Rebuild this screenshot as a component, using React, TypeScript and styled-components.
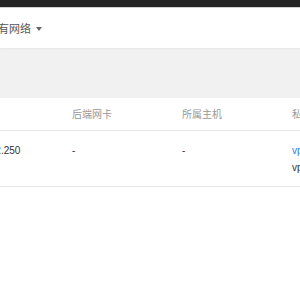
import React from "react";
import styled, { createGlobalStyle } from "styled-components";

const Global = createGlobalStyle`
  html, body { margin: 0; padding: 0; background: #fff; overflow: hidden; }
  body {
    width: 300px;
    font-family: "Liberation Sans", "Noto Sans CJK SC", sans-serif;
  }
`;

const TopBar = styled.div`
  height: 7px;
  background: #242424;
  border-bottom: 1px solid #d0d0d0;
`;

const FilterBar = styled.div`
  height: 40px;
  box-sizing: border-box;
  padding-top: 2px;
  display: flex;
  align-items: center;
  background: #fff;
  position: relative;
  z-index: 1;
  box-shadow: 0 1px 2px rgba(0, 0, 0, 0.05);
`;

const FilterLabel = styled.span`
  margin-left: -13px;
  font-size: 11px;
  line-height: 1;
  color: #555;
  display: flex;
  align-items: center;
  gap: 5px;
  white-space: nowrap;
`;

const Caret = styled.span`
  width: 0;
  height: 0;
  border-left: 3.5px solid transparent;
  border-right: 3.5px solid transparent;
  border-top: 4px solid #666;
`;

const Band = styled.div`
  height: 50px;
  background: #f1f1f1;
`;

const Table = styled.div`
  margin-left: -38px;
  font-size: 10px;
`;

const Row = styled.div<{ $head?: boolean }>`
  display: grid;
  grid-template-columns: repeat(4, 110px);
  border-bottom: 1px solid #e6e6e6;
  box-sizing: border-box;
  height: ${(p) => (p.$head ? "33px" : "56px")};
  align-items: ${(p) => (p.$head ? "center" : "start")};
  padding-top: ${(p) => (p.$head ? "0" : "11px")};
  color: ${(p) => (p.$head ? "#999" : "#333")};
`;

const Cell = styled.div`
  display: flex;
  flex-direction: column;
  line-height: 17px;
  white-space: nowrap;
  overflow: hidden;
`;

const Link = styled.span`
  color: #2e7be6;
`;

export default function App() {
  return (
    <>
      <Global />
      <TopBar />
      <FilterBar>
        <FilterLabel>
          所有网络
          <Caret />
        </FilterLabel>
      </FilterBar>
      <Band />
      <Table>
        <Row $head>
          <Cell>内网IP</Cell>
          <Cell>后端网卡</Cell>
          <Cell>所属主机</Cell>
          <Cell>私有网络</Cell>
        </Row>
        <Row>
          <Cell>172.16.2.250</Cell>
          <Cell>-</Cell>
          <Cell>-</Cell>
          <Cell>
            <Link>vpc-2f8a</Link>
            <span>vpc-default</span>
          </Cell>
        </Row>
      </Table>
    </>
  );
}
